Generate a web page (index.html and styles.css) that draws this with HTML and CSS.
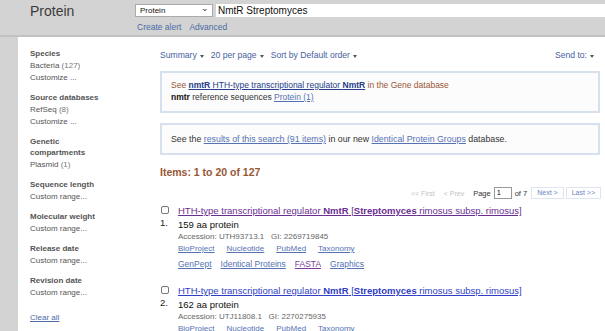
FILE: index.html
```html
<!DOCTYPE html>
<html>
<head>
<meta charset="utf-8">
<link rel="stylesheet" href="styles.css">
</head>
<body>
<div class="header">
  <div class="db-title">Protein</div>
  <div class="search">
    <div class="search-row">
      <div class="db-select"><span>Protein</span><span class="chev">&#8964;</span></div>
      <div class="term">NmtR Streptomyces</div>
    </div>
    <div class="search-links"><a>Create alert</a><a>Advanced</a></div>
  </div>
</div>
<div class="page">
  <div class="sidebar">
    <div class="group">
      <div class="gh">Species</div>
      <div class="gl">Bacteria <span class="cnt">(127)</span></div>
      <div class="gl">Customize ...</div>
    </div>
    <div class="group">
      <div class="gh">Source databases</div>
      <div class="gl">RefSeq <span class="cnt">(8)</span></div>
      <div class="gl">Customize ...</div>
    </div>
    <div class="group">
      <div class="gh two">Genetic compartments</div>
      <div class="gl">Plasmid <span class="cnt">(1)</span></div>
    </div>
    <div class="group">
      <div class="gh">Sequence length</div>
      <div class="gl">Custom range...</div>
    </div>
    <div class="group">
      <div class="gh">Molecular weight</div>
      <div class="gl">Custom range...</div>
    </div>
    <div class="group">
      <div class="gh">Release date</div>
      <div class="gl">Custom range...</div>
    </div>
    <div class="group">
      <div class="gh">Revision date</div>
      <div class="gl">Custom range...</div>
    </div>
    <a class="clear">Clear all</a>
  </div>
  <div class="main">
    <div class="toolbar">
      <div class="tools">
        <span class="tool">Summary<i class="tri"></i></span>
        <span class="tool">20 per page<i class="tri"></i></span>
        <span class="tool">Sort by Default order<i class="tri"></i></span>
      </div>
      <span class="tool">Send to:<i class="tri"></i></span>
    </div>
    <div class="box box1">
      <div class="brown">See <a class="dk"><b>nmtR</b> HTH-type transcriptional regulator <b>NmtR</b></a> in the Gene database</div>
      <div><b>nmtr</b> reference sequences <a class="lk">Protein (1)</a></div>
    </div>
    <div class="box box2">
      See the <a class="lk">results of this search (91 items)</a> in our new <a class="lk">Identical Protein Groups</a> database.
    </div>
    <h2 class="items">Items: 1 to 20 of 127</h2>
    <div class="pager">
      <span class="off">&lt;&lt; First</span>
      <span class="off">&lt; Prev</span>
      <span class="pg">Page</span>
      <span class="pinput">1</span>
      <span class="pof">of 7</span>
      <span class="pbtn">Next &gt;</span>
      <span class="pbtn">Last &gt;&gt;</span>
    </div>
    <div class="result">
      <div class="rleft"><span class="cb"></span><span class="num">1.</span></div>
      <div class="rbody">
        <a class="rtitle visited">HTH-type transcriptional regulator <b>NmtR</b> [<b>Streptomyces</b> rimosus subsp. rimosus]</a>
        <div class="desc">159 aa protein</div>
        <div class="acc">Accession: UTH93713.1&nbsp;&nbsp; GI: 2269719845</div>
        <div class="rlinks"><a>BioProject</a><a>Nucleotide</a><a>PubMed</a><a>Taxonomy</a></div>
        <div class="rlinks rlinks2"><a>GenPept</a><a>Identical Proteins</a><a class="v">FASTA</a><a>Graphics</a></div>
      </div>
    </div>
    <div class="result">
      <div class="rleft"><span class="cb"></span><span class="num">2.</span></div>
      <div class="rbody">
        <a class="rtitle">HTH-type transcriptional regulator <b>NmtR</b> [<b>Streptomyces</b> rimosus subsp. rimosus]</a>
        <div class="desc">162 aa protein</div>
        <div class="acc">Accession: UTJ11808.1&nbsp;&nbsp; GI: 2270275935</div>
        <div class="rlinks"><a>BioProject</a><a>Nucleotide</a><a>PubMed</a><a>Taxonomy</a></div>
      </div>
    </div>
  </div>
</div>
</body>
</html>
```

FILE: styles.css
```css
* { box-sizing: border-box; }
html, body { margin: 0; padding: 0; }
body {
  background: #d3d3d3;
  font-family: "Liberation Sans", Arial, sans-serif;
  color: #222;
  height: 331px;
  overflow: hidden;
}
a { text-decoration: none; }

.header {
  display: flex;
  height: 37px;
  padding: 4px 0 0 30px;
  border-bottom: 2px solid #c2c2c2;
}
.db-title {
  width: 105px;
  font-size: 14px;
  line-height: 14px;
  color: #3a3a3a;
}
.search { flex: 1; }
.search-row { display: flex; height: 13px; }
.db-select {
  width: 78px;
  background: #fff;
  border: 1px solid #aaa;
  font-size: 8px;
  line-height: 11px;
  padding-left: 4px;
  display: flex;
  justify-content: space-between;
  color: #111;
}
.chev { font-size: 9px; line-height: 7px; padding-right: 3px; color: #333; }
.term {
  flex: 1;
  margin-left: 3px;
  background: #fff;
  font-size: 10px;
  line-height: 13px;
  padding-left: 2px;
  color: #111;
}
.search-links {
  padding: 4px 0 0 2px;
  font-size: 8.5px;
  line-height: 12px;
}
.search-links a { color: #4a6ba5; margin-right: 8px; }

.page {
  margin-left: 18px;
  background: #fff;
  display: flex;
  height: 300px;
}
.sidebar {
  width: 142px;
  padding: 11px 0 0 12px;
  font-size: 8px;
  color: #555;
}
.group { margin-bottom: 8px; }
.gh { font-weight: bold; line-height: 12px; color: #555; }
.gh.two { width: 70px; line-height: 11px; margin-bottom: 1px; }
.gl { line-height: 12px; color: #555; }
.cnt { color: #777; }
.clear { display: block; margin-top: 13px; color: #4a6ba5; text-decoration: underline; line-height: 12px; }

.main { flex: 1; padding: 12px 5px 0 0; }
.toolbar {
  display: flex;
  justify-content: space-between;
  font-size: 8.6px;
  line-height: 12px;
  color: #47619f;
  padding-right: 6px;
}
.tools { display: flex; gap: 7px; }
.tool { display: inline-flex; align-items: center; }
.tri {
  display: inline-block;
  margin-left: 3px;
  margin-top: 2px;
  border-left: 2.5px solid transparent;
  border-right: 2.5px solid transparent;
  border-top: 3px solid #555;
}
.box {
  border: 2px solid #d6e1ed;
  background: #fcfcfc;
  font-size: 8.5px;
  line-height: 12px;
  color: #333;
  padding-left: 9px;
}
.box1 { margin-top: 10px; padding-top: 6px; padding-bottom: 8px; }
.box2 { margin-top: 10px; padding-top: 8px; padding-bottom: 8px; font-size: 8.8px; }
.brown { color: #985735; }
.dk { color: #253d8a; text-decoration: underline; }
.lk { color: #5572b3; text-decoration: underline; }
.box b { color: #111; }
.dk b { color: #253d8a; }

.items {
  margin: 10px 0 0 0;
  font-size: 10.5px;
  line-height: 14px;
  color: #985735;
  font-weight: bold;
}
.pager {
  margin-top: 8px;
  display: flex;
  justify-content: flex-end;
  align-items: center;
  font-size: 7px;
  height: 12px;
  margin-right: -1px;
}
.off { color: #c3c3c3; margin-right: 9px; }
.pg { color: #333; margin-right: 3px; font-size: 7.5px; }
.pinput { width: 18px; height: 12px; border: 1px solid #999; line-height: 10px; padding-left: 2px; color: #111; margin-right: 3px; font-size: 7.5px; }
.pof { color: #333; margin-right: 2px; font-size: 7.5px; }
.pbtn { border: 1px solid #dfe4ee; color: #6b86c0; height: 12px; line-height: 10px; padding: 0 5px; margin-left: 2px; }

.result { display: flex; margin-top: 5px; }
.result + .result { margin-top: 14px; }
.rleft { width: 18px; display: flex; flex-direction: column; }
.cb { width: 8px; height: 8px; border: 1px solid #777; border-radius: 2px; margin: 2px 0 0 1px; }
.num { font-size: 9.5px; line-height: 11px; margin-top: 3px; color: #222; }
.rtitle { display: block; font-size: 9.5px; line-height: 13px; color: #2f3ec4; text-decoration: underline; }
.rtitle.visited { color: #6a2e91; }
.desc { font-size: 9.5px; line-height: 13px; color: #111; margin-top: 1px; }
.acc { font-size: 8px; line-height: 12px; color: #666; }
.rlinks { font-size: 8px; line-height: 11px; display: flex; gap: 12px; }
.rlinks a { color: #5572b3; text-decoration: underline; }
.rlinks2 { margin-top: 5px; font-size: 8.5px; gap: 9px; }
.rlinks a.v { color: #7a3e9a; }
```
